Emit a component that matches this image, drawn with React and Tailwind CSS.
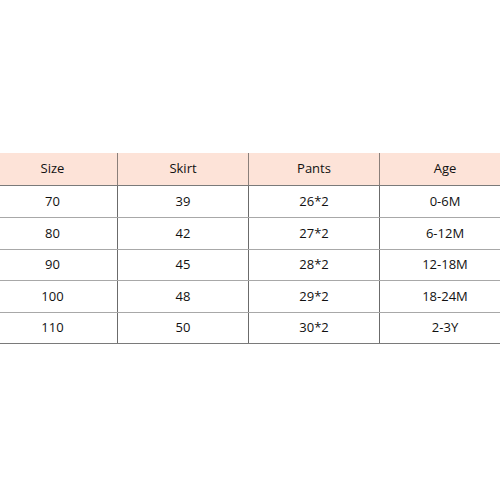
export default function App() {
  const header = ["Size", "Skirt", "Pants", "Age"];
  const rows = [
    ["70", "39", "26*2", "0-6M", "h-[32px]"],
    ["80", "42", "27*2", "6-12M", "h-[32px]"],
    ["90", "45", "28*2", "12-18M", "h-[31px]"],
    ["100", "48", "29*2", "18-24M", "h-[32px]"],
    ["110", "50", "30*2", "2-3Y", "h-[31px]"],
  ];
  const pad = ["pr-[12px]", "", "", "pl-[10px]"];
  const cell = (i) => (i === 0 ? "" : "border-l border-[#6b6b6b]");
  return (
    <div className="w-[500px] h-[500px] bg-white pt-[153px] text-[13px] text-[#111]" style={{ fontFamily: '"Open Sans", "Noto Sans", sans-serif' }}>
      <div className="grid grid-cols-[117px_131px_131px_121px] h-[33px] bg-[#fde3d8] border-b border-[#7a7a7a]">
        {header.map((h, i) => (
          <div key={h} className={`flex items-center justify-center ${pad[i]} ${i === 0 ? "" : "border-l border-[#8a7f7a]"}`}>{h}</div>
        ))}
      </div>
      {rows.map((r, ri) => (
        <div key={ri} className={`grid grid-cols-[117px_131px_131px_121px] ${r[4]} border-b ${ri === 4 ? "border-[#7a7a7a]" : "border-[#a8a8a8]"}`}>
          {r.slice(0, 4).map((c, i) => (
            <div key={i} className={`flex items-center justify-center ${pad[i]} ${cell(i)}`}>{c}</div>
          ))}
        </div>
      ))}
    </div>
  );
}
